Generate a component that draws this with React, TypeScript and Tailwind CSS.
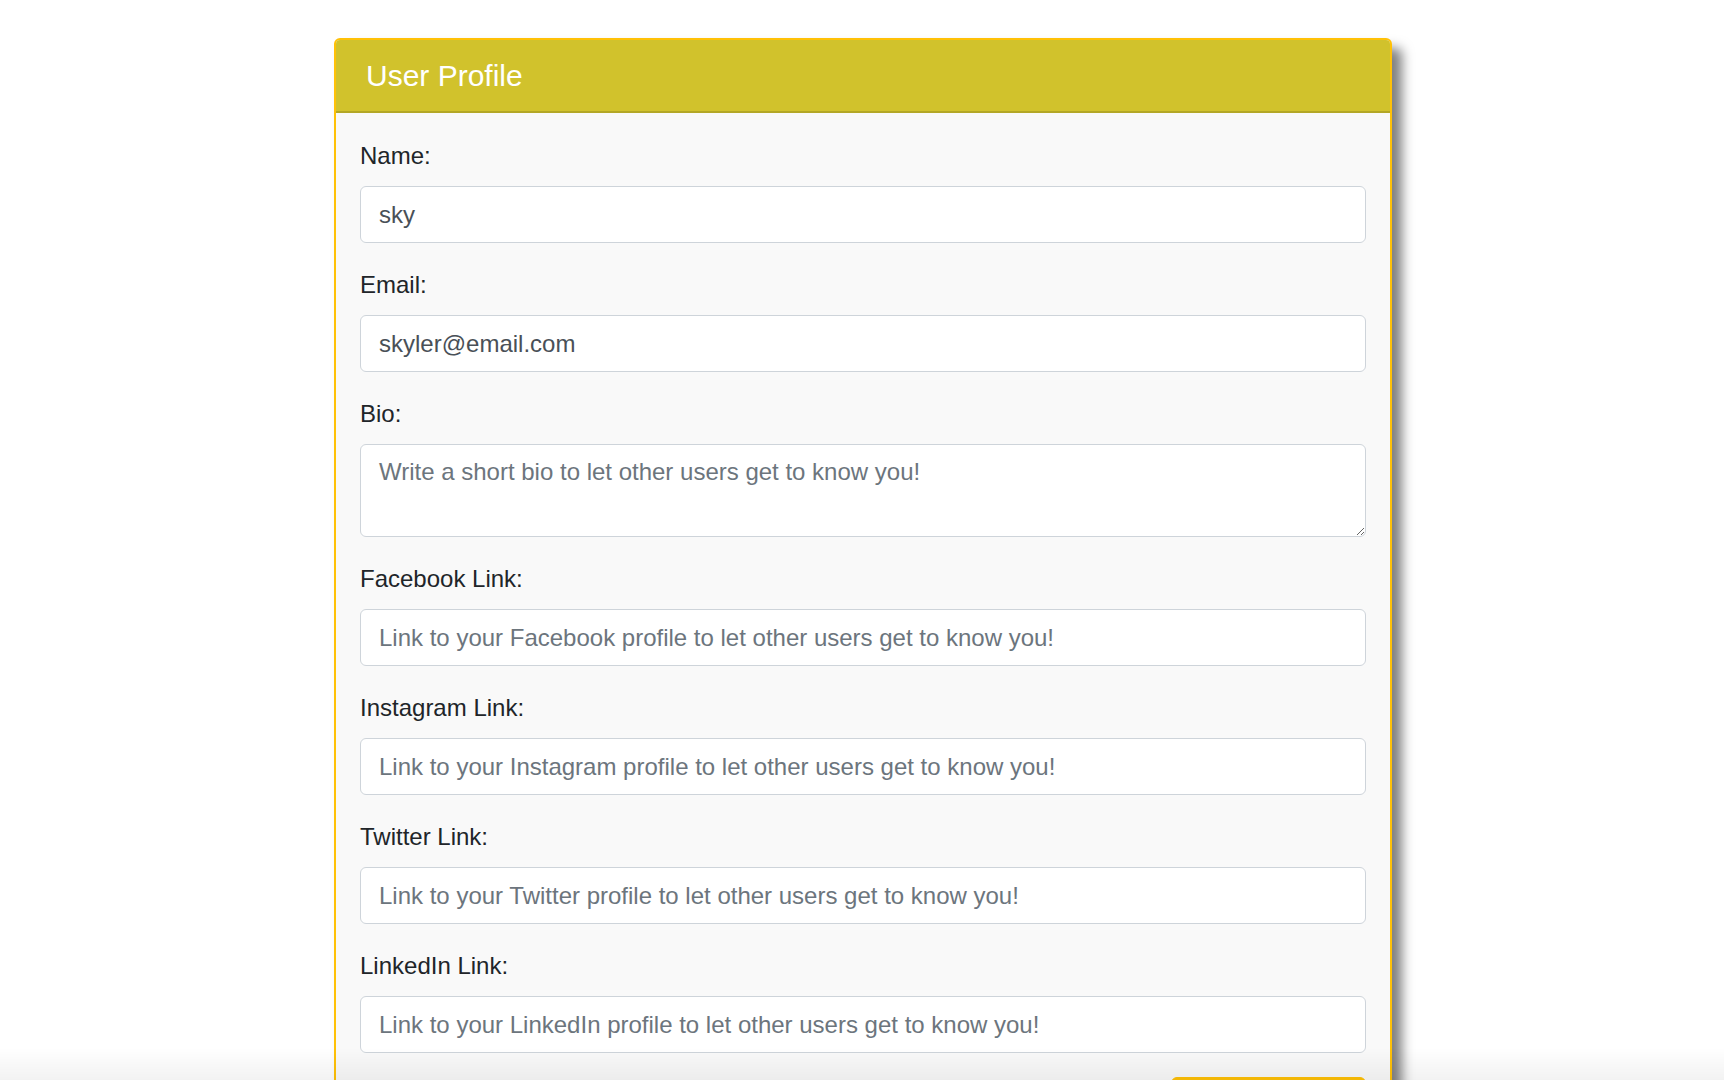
import React from "react";

const font = { fontFamily: '"Liberation Sans", Arial, Helvetica, sans-serif' };

function Field({
  label,
  value,
  placeholder,
}: {
  label: string;
  value?: string;
  placeholder?: string;
}) {
  return (
    <div className="mb-6">
      <label className="block text-[24px] leading-[36px] mb-3 text-[#212529]">{label}</label>
      <input
        type="text"
        defaultValue={value}
        placeholder={placeholder}
        className="block w-full h-[57px] px-[18px] border-[1.5px] border-[#ced4da] rounded-[6px] bg-white text-[24px] leading-[36px] text-[#495057] placeholder:text-[#6c757d] outline-none"
      />
    </div>
  );
}

export default function App() {
  return (
    <div className="min-h-screen bg-white flex justify-center pl-[2px]" style={font}>
      <div className="w-[1058px] pt-[38px] pb-10">
        <div className="border-2 border-[#ffc107] rounded-[6px] bg-[#f9f9f9] shadow-[10px_10px_12px_rgba(0,0,0,0.5)] overflow-hidden">
          <div className="bg-[#d1c22c] border-b-2 border-[#b3a726] px-[30px] pt-[18px] pb-[17px]">
            <h2 className="text-[30px] leading-[36px] text-white">User Profile</h2>
          </div>
          <div className="p-6 pt-[25px]">
            <Field label="Name:" value="sky" />
            <Field label="Email:" value="skyler@email.com" />
            <div className="mb-6">
              <label className="block text-[24px] leading-[36px] mb-3 text-[#212529]">Bio:</label>
              <textarea
                rows={2}
                placeholder="Write a short bio to let other users get to know you!"
                className="block w-full h-[93px] px-[18px] py-[9px] border-[1.5px] border-[#ced4da] rounded-[6px] bg-white text-[24px] leading-[36px] text-[#495057] placeholder:text-[#6c757d] outline-none resize-y"
              />
            </div>
            <Field label="Facebook Link:" placeholder="Link to your Facebook profile to let other users get to know you!" />
            <Field label="Instagram Link:" placeholder="Link to your Instagram profile to let other users get to know you!" />
            <Field label="Twitter Link:" placeholder="Link to your Twitter profile to let other users get to know you!" />
            <Field label="LinkedIn Link:" placeholder="Link to your LinkedIn profile to let other users get to know you!" />
            <div className="flex justify-end">
              <button className="h-[57px] px-[18px] bg-[#ffc107] border-[1.5px] border-[#ffc107] rounded-[6px] text-[24px] text-[#212529]">
                Save Changes
              </button>
            </div>
          </div>
        </div>
      </div>
      <div className="fixed inset-x-0 bottom-0 h-8 bg-gradient-to-b from-transparent to-black/[0.05] pointer-events-none" />
    </div>
  );
}
